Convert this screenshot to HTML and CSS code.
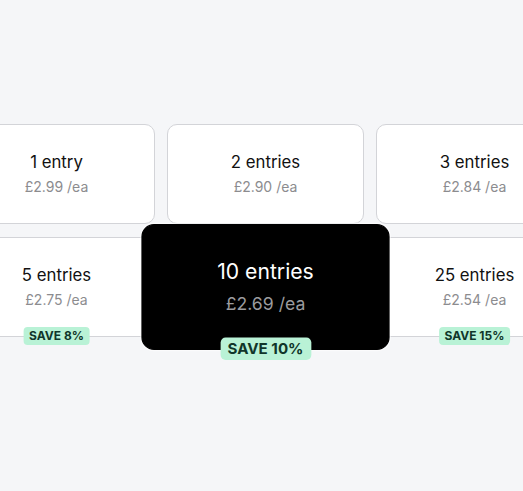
FILE: index.html
```html
<!DOCTYPE html>
<html lang="en">
<head>
<meta charset="utf-8">
<title>Entries</title>
<link rel="stylesheet" href="styles.css">
</head>
<body>
<main class="stage">
  <div class="grid">
    <div class="card">
      <div class="title">1 entry</div>
      <div class="price">£2.99 /ea</div>
    </div>
    <div class="card">
      <div class="title">2 entries</div>
      <div class="price">£2.90 /ea</div>
    </div>
    <div class="card">
      <div class="title">3 entries</div>
      <div class="price">£2.84 /ea</div>
    </div>
    <div class="card">
      <div class="title">5 entries</div>
      <div class="price">£2.75 /ea</div>
      <span class="badge">SAVE 8%</span>
    </div>
    <div class="card selected">
      <div class="title">10 entries</div>
      <div class="price">£2.69 /ea</div>
      <span class="badge">SAVE 10%</span>
    </div>
    <div class="card">
      <div class="title">25 entries</div>
      <div class="price">£2.54 /ea</div>
      <span class="badge">SAVE 15%</span>
    </div>
  </div>
</main>
</body>
</html>
```

FILE: styles.css
```css
html, body {
  margin: 0;
  padding: 0;
  overflow: hidden;
  background: #f5f6f8;
  font-family: Inter, "Liberation Sans", sans-serif;
}

.stage {
  padding-top: 124px;
  height: 491px;
  box-sizing: border-box;
  overflow: hidden;
}

.grid {
  display: grid;
  grid-template-columns: repeat(3, 197px);
  grid-auto-rows: 100px;
  column-gap: 12px;
  row-gap: 13px;
  width: 615px;
  margin-left: -42px;
}

.card {
  position: relative;
  box-sizing: border-box;
  background: #ffffff;
  border: 1px solid #d3d4d8;
  border-radius: 10px;
  display: flex;
  flex-direction: column;
  align-items: center;
  padding-top: 27px;
}

.title {
  font-size: 16.8px;
  line-height: 20px;
  color: #111111;
}

.price {
  margin-top: 6px;
  font-size: 14px;
  line-height: 18px;
  color: #8c8c8f;
}

.badge {
  position: absolute;
  left: 50%;
  bottom: 0;
  transform: translate(-50%, 50%);
  background: #b9f2d6;
  color: #10362a;
  font-size: 12px;
  font-weight: 700;
  line-height: 14px;
  padding: 2px 6px;
  border-radius: 4px;
  white-space: nowrap;
}

.selected {
  background: #000000;
  border-color: #000000;
  transform: scale(1.26);
  z-index: 2;
  box-shadow: 0 0 0 1px rgba(255, 255, 255, 0.6);
}

.selected .title {
  color: #ffffff;
}

.selected .price {
  color: #9b9b9e;
}
```
